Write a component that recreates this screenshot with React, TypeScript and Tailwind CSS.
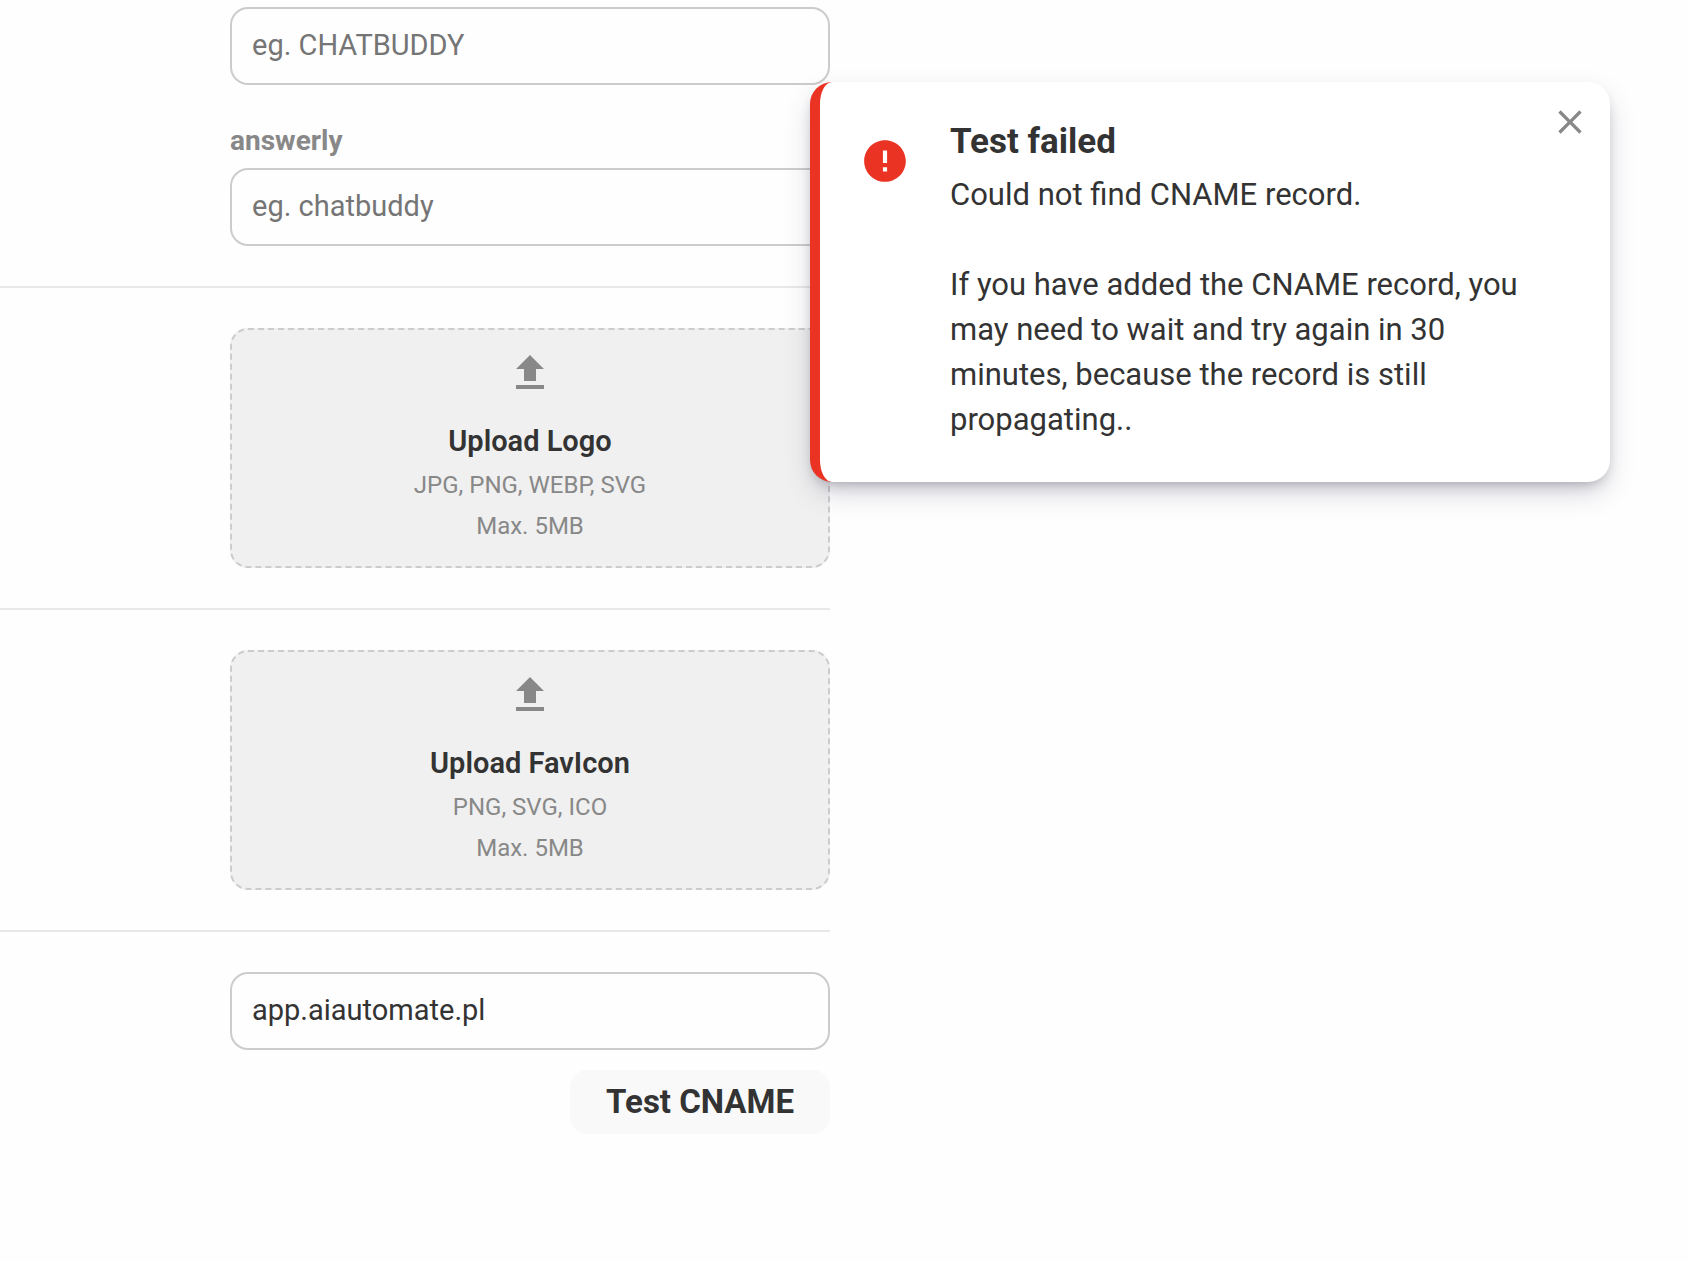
import { useState } from "react";
import { MdClose, MdError, MdFileUpload } from "react-icons/md";

const fieldClass =
  "block h-[78px] w-full rounded-[18px] border-2 border-[#ccc] bg-transparent px-5 pb-0.5 text-[29px] text-[#333] outline-none placeholder:text-[#757575]";

/** One settings row. The rule under it runs the full width, the fields sit right. */
function Row({
  last,
  className = "",
  children,
}: {
  last?: boolean;
  className?: string;
  children: React.ReactNode;
}) {
  return (
    <section
      className={`pl-[230px] ${last ? "" : "border-b-2 border-[#e8e8e8] pb-10"} ${className}`}
    >
      {children}
    </section>
  );
}

function UploadBox({ title, formats }: { title: string; formats: string }) {
  return (
    <button
      type="button"
      className="flex h-60 w-full flex-col items-center justify-center rounded-[18px] border-2 border-dashed border-[#ccc] bg-[#f0f0f0] text-2xl leading-[41px] text-[#888]"
    >
      <MdFileUpload className="mb-5 size-12" aria-hidden />
      <span className="text-[29px] leading-[48px] font-semibold text-[#333]">
        {title}
      </span>
      <span>{formats}</span>
      <span>Max. 5MB</span>
    </button>
  );
}

function Toast({ onClose }: { onClose: () => void }) {
  return (
    <div
      role="alert"
      className="absolute top-[82px] right-[78px] flex w-[800px] gap-10 rounded-[22px] border-l-10 border-[#ea3323] bg-white pt-9 pr-15 pb-10 pl-10 text-[#333] shadow-[0_12px_28px_-4px_rgba(50,50,93,0.25),0_6px_14px_-6px_rgba(0,0,0,0.3)]"
    >
      <MdError className="mt-[18px] size-[50px] shrink-0 text-[#ea3323]" aria-hidden />
      <div>
        <h2 className="mb-1.5 text-[35px] leading-[48px] font-bold">Test failed</h2>
        <p className="text-[31px] leading-[45px]">Could not find CNAME record.</p>
        <p className="mt-[45px] text-[31px] leading-[45px]">
          If you have added the CNAME record, you may need to wait and try again
          in 30 minutes, because the record is still propagating..
        </p>
      </div>
      <button
        type="button"
        aria-label="Close"
        onClick={onClose}
        className="absolute top-5 right-5 text-[#888]"
      >
        <MdClose className="size-10" />
      </button>
    </div>
  );
}

export default function App() {
  const [domain, setDomain] = useState("app.aiautomate.pl");
  const [failed, setFailed] = useState(true);

  return (
    <div className="relative min-h-screen bg-[#fefefe] font-['Roboto',sans-serif]">
      <form className="w-full max-w-[830px] pt-[7px]" onSubmit={(e) => e.preventDefault()}>
        <Row>
          <input aria-label="Brand name" placeholder="eg. CHATBUDDY" className={fieldClass} />
          <label
            htmlFor="answerly"
            className="mt-9 mb-2 block text-[28px] leading-[39px] font-bold text-[#888]"
          >
            answerly
          </label>
          <input id="answerly" placeholder="eg. chatbuddy" className={fieldClass} />
        </Row>

        <Row className="pt-10">
          <UploadBox title="Upload Logo" formats="JPG, PNG, WEBP, SVG" />
        </Row>

        <Row className="pt-10">
          <UploadBox title="Upload FavIcon" formats="PNG, SVG, ICO" />
        </Row>

        <Row last className="pt-10">
          <input
            aria-label="Custom domain"
            value={domain}
            onChange={(e) => setDomain(e.target.value)}
            className={fieldClass}
          />
          <div className="mt-5 flex justify-end">
            <button
              type="button"
              onClick={() => setFailed(true)}
              className="h-16 rounded-[18px] bg-[#f9f9f9] px-9 text-[33px] font-bold text-[#333]"
            >
              Test CNAME
            </button>
          </div>
        </Row>
      </form>

      {failed && <Toast onClose={() => setFailed(false)} />}
    </div>
  );
}
